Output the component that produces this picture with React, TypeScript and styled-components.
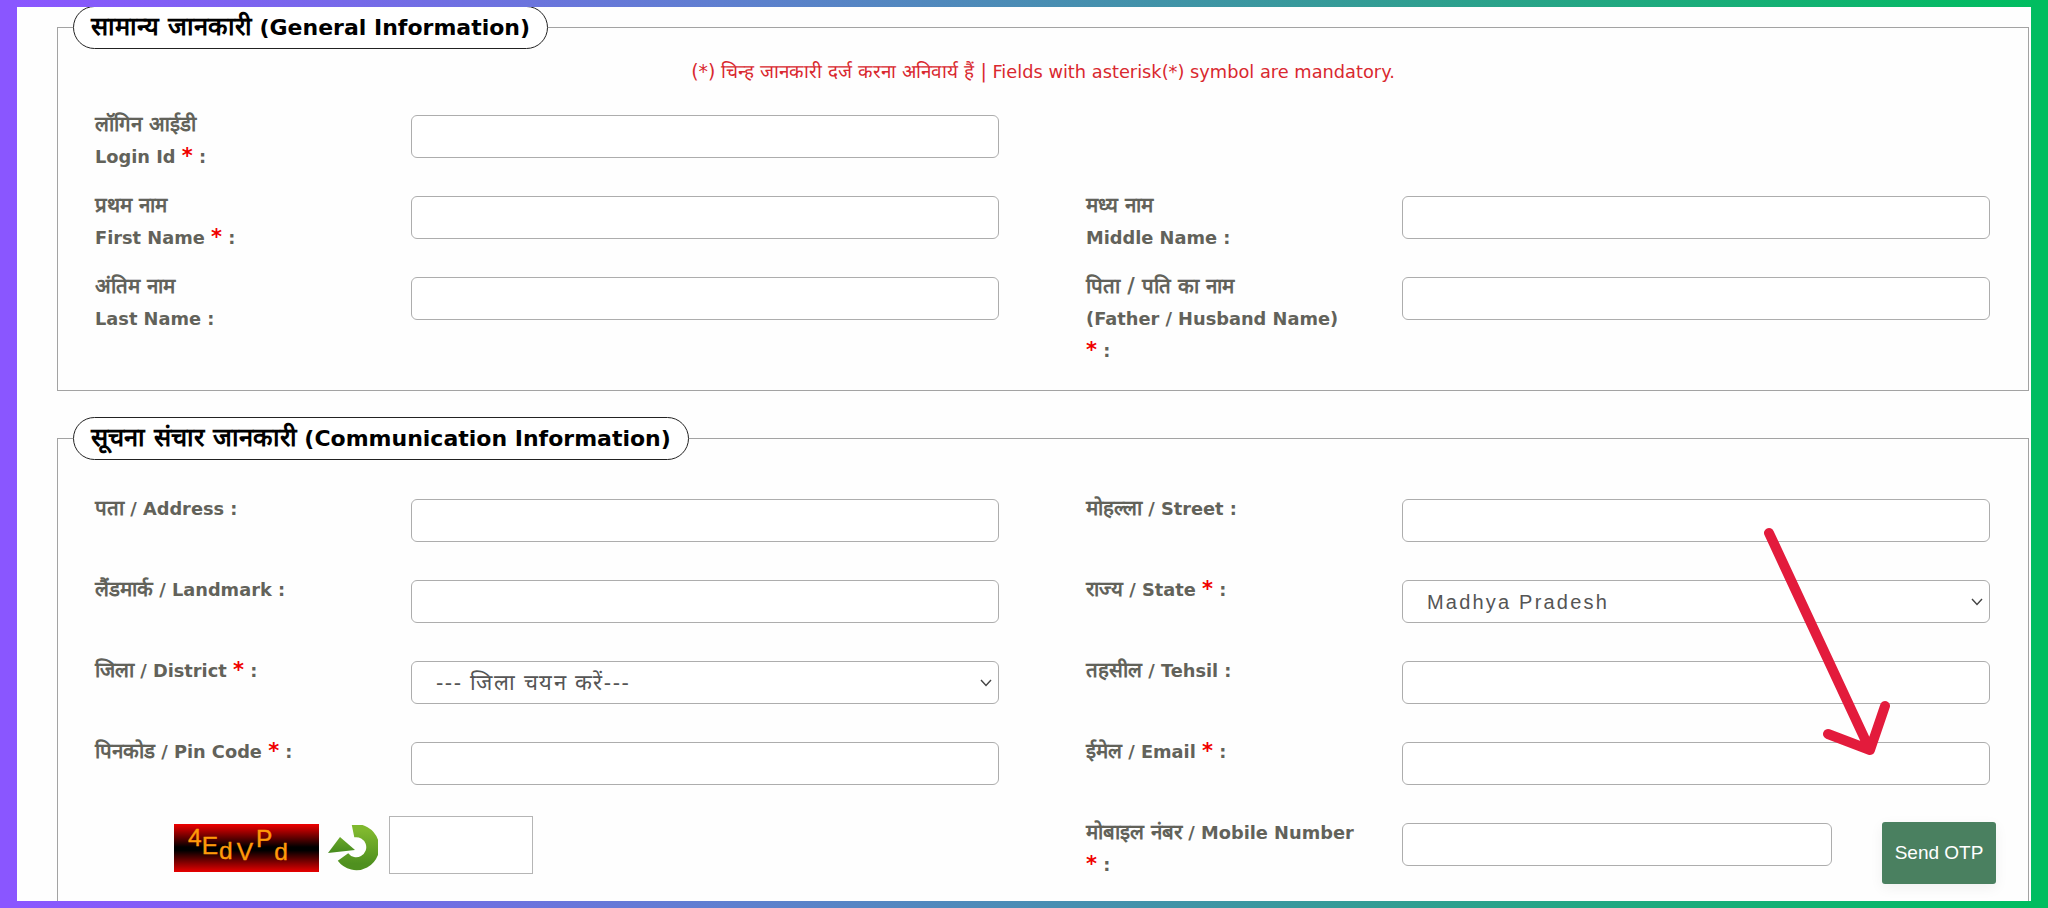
import React from 'react'
import styled, { createGlobalStyle } from 'styled-components'

const GlobalStyle = createGlobalStyle`
  html, body {
    margin: 0;
    padding: 0;
    background: #fff;
  }
`

const chevron =
  "data:image/svg+xml,%3Csvg xmlns='http://www.w3.org/2000/svg' width='12' height='8' viewBox='0 0 12 8'%3E%3Cpath d='M1 1l5 5.5L11 1' fill='none' stroke='%23444' stroke-width='1.4'/%3E%3C/svg%3E"

const Frame = styled.div`
  position: relative;
  box-sizing: border-box;
  width: 2048px;
  height: 908px;
  overflow: hidden;
  padding: 0 19px 0 57px;
  background: #fefefe;
  font-family: 'DejaVu Sans', Verdana, sans-serif;
`

const GradientEdge = styled.div`
  position: absolute;
  inset: 0;
  border-style: solid;
  border-width: 7px 17px;
  border-image: linear-gradient(90deg, #8a56ff 0%, #5f7fd0 35%, #2f9f90 70%, #00bd60 100%) 1;
  pointer-events: none;
  z-index: 5;
`

const Section = styled.fieldset<{ $gap: number; $pad: number }>`
  box-sizing: border-box;
  margin: ${({ $gap }) => $gap}px 0 0;
  padding: 0 0 ${({ $pad }) => $pad}px;
  border: 1.5px solid #a3a3a3;
  min-width: 0;
`

const Title = styled.legend`
  box-sizing: border-box;
  height: 43px;
  margin-left: 15px;
  padding: 3px 17px 0;
  border: 1.5px solid #222;
  border-radius: 22px;
  background: #fff;
  color: #000;
  font-size: 22px;
  font-weight: 700;
  line-height: 36px;
  white-space: nowrap;
`

const TitleHindi = styled.span`
  font-size: 25.4px;
  line-height: 1;
`

const Note = styled.div`
  margin-top: 6px;
  height: 33px;
  color: #d9282f;
  font-size: 17.8px;
  line-height: 33px;
  text-align: center;
`

const NoteHindi = styled.span`
  font-size: 18.9px;
  line-height: 1;
`

const FormGrid = styled.div<{ $top: number }>`
  display: grid;
  grid-template-columns: 316px 588px 403px 588px;
  row-gap: 17px;
  margin: ${({ $top }) => $top}px 0 0 37px;
  align-items: start;
  grid-auto-rows: minmax(64px, auto);
`

const LabelText = styled.div<{ $right?: boolean }>`
  margin-left: ${({ $right }) => ($right ? '87px' : '0')};
  margin-bottom: -1px;
  padding-top: 1px;
  color: #62625a;
  font-size: 17.8px;
  font-weight: 700;
  line-height: 32px;
  white-space: nowrap;
`

const LabelHindi = styled.span`
  font-size: 20.5px;
  line-height: 1;
`

const Star = styled.span`
  color: #f00000;
  font-size: 21px;
  line-height: 1;
`

const TextBox = styled.input<{ $width?: number }>`
  display: block;
  box-sizing: border-box;
  width: ${({ $width }) => $width ?? 588}px;
  height: 43px;
  margin: 7px 0 0;
  padding: 0 16px;
  border: 1.5px solid #adadad;
  border-radius: 6px;
  background: #fff;
  outline: none;
`

const Dropdown = styled.select<{ $hindi?: boolean }>`
  display: block;
  box-sizing: border-box;
  width: 588px;
  height: 43px;
  margin: 7px 0 0;
  padding: 0 24px;
  appearance: none;
  border: 1.5px solid #adadad;
  border-radius: 6px;
  background: #fff url("${chevron}") no-repeat right 6px center;
  color: #555;
  font-family: 'Liberation Sans', Arial, sans-serif;
  font-size: ${({ $hindi }) => ($hindi ? '22px' : '20px')};
  letter-spacing: ${({ $hindi }) => ($hindi ? '1.5px' : '2.2px')};
  outline: none;
`

const CaptchaCell = styled.div`
  grid-column: 1 / span 2;
  display: flex;
  align-items: flex-start;
  height: 64px;
  padding-left: 79px;
`

const CaptchaImage = styled.div`
  display: flex;
  align-items: flex-start;
  box-sizing: border-box;
  width: 145px;
  height: 48px;
  margin-top: 8px;
  padding-left: 14px;
  background: linear-gradient(180deg, #f00000 0%, #000 48%, #000 55%, #e80000 100%);
`

const CaptchaChar = styled.span<{ $top: number; $gap: number }>`
  margin-top: ${({ $top }) => $top}px;
  margin-left: ${({ $gap }) => $gap}px;
  color: #ff9a0a;
  font-family: 'Liberation Sans', Arial, sans-serif;
  font-size: 24.5px;
  line-height: 24px;
  -webkit-text-stroke: 0.4px #ff9a0a;
`

const RefreshIcon = styled.svg`
  flex: none;
  width: 52px;
  height: 46px;
  margin: 9px 0 0 7px;
`

const CaptchaInput = styled.input`
  box-sizing: border-box;
  width: 144px;
  height: 58px;
  margin-left: 11px;
  border: 1.5px solid #b5b5b5;
  background: #fff;
  outline: none;
`

const OtpCell = styled.div`
  display: flex;
  align-items: flex-start;
  width: 594px;
`

const SendOtpButton = styled.button`
  box-sizing: border-box;
  flex: none;
  width: 114px;
  height: 62px;
  margin: 6px 0 0 50px;
  padding: 0;
  border: none;
  border-radius: 3px;
  background: #4a8060;
  box-shadow: 0 4px 14px rgba(0, 0, 0, 0.06);
  color: #fff;
  font-family: 'Liberation Sans', Arial, sans-serif;
  font-size: 19px;
`

const ArrowOverlay = styled.svg`
  position: absolute;
  top: 0;
  left: 0;
  width: 2048px;
  height: 908px;
  pointer-events: none;
  z-index: 4;
`

type LabelProps = {
  hindi?: string
  text: string
  required?: boolean
  right?: boolean
  stacked?: boolean
  starBreak?: boolean
}

const Label: React.FC<LabelProps> = ({ hindi, text, required, right, stacked, starBreak }) => (
  <LabelText $right={right}>
    {hindi && <LabelHindi>{hindi}</LabelHindi>}
    {stacked ? <br /> : hindi && ' / '}
    {text}
    {starBreak ? <br /> : ' '}
    {required && (
      <>
        <Star>*</Star>{' '}
      </>
    )}
    :
  </LabelText>
)

const captchaChars = [
  { c: '4', top: 2, gap: 0 },
  { c: 'E', top: 10, gap: 0 },
  { c: 'd', top: 15, gap: 1 },
  { c: 'V', top: 16, gap: 4 },
  { c: 'P', top: 3, gap: 3 },
  { c: 'd', top: 16, gap: 2 },
]

const App: React.FC = () => {
  return (
    <Frame>
      <GlobalStyle />
      <Section $gap={6} $pad={24}>
        <Title>
          <TitleHindi>सामान्य जानकारी</TitleHindi> (General Information)
        </Title>
        <Note>
          <NoteHindi>(*) चिन्ह जानकारी दर्ज करना अनिवार्य हैं |</NoteHindi> Fields with asterisk(*) symbol are mandatory.
        </Note>
        <FormGrid $top={20}>
          <Label stacked hindi="लॉगिन आईडी" text="Login Id" required />
          <TextBox />
          <span />
          <span />
          <Label stacked hindi="प्रथम नाम" text="First Name" required />
          <TextBox />
          <Label stacked right hindi="मध्य नाम" text="Middle Name" />
          <TextBox />
          <Label stacked hindi="अंतिम नाम" text="Last Name" />
          <TextBox />
          <Label stacked right hindi="पिता / पति का नाम" text="(Father / Husband Name)" required starBreak />
          <TextBox />
        </FormGrid>
      </Section>
      <Section $gap={26} $pad={40}>
        <Title>
          <TitleHindi>सूचना संचार जानकारी</TitleHindi> (Communication Information)
        </Title>
        <FormGrid $top={32}>
          <Label hindi="पता" text="Address" />
          <TextBox />
          <Label right hindi="मोहल्ला" text="Street" />
          <TextBox />
          <Label hindi="लैंडमार्क" text="Landmark" />
          <TextBox />
          <Label right hindi="राज्य" text="State" required />
          <Dropdown defaultValue="mp">
            <option value="mp">Madhya Pradesh</option>
          </Dropdown>
          <Label hindi="जिला" text="District" required />
          <Dropdown $hindi defaultValue="">
            <option value="">--- जिला चयन करें---</option>
          </Dropdown>
          <Label right hindi="तहसील" text="Tehsil" />
          <TextBox />
          <Label hindi="पिनकोड" text="Pin Code" required />
          <TextBox />
          <Label right hindi="ईमेल" text="Email" required />
          <TextBox />
          <CaptchaCell>
            <CaptchaImage>
              {captchaChars.map((item, index) => (
                <CaptchaChar key={index} $top={item.top} $gap={item.gap}>
                  {item.c}
                </CaptchaChar>
              ))}
            </CaptchaImage>
            <RefreshIcon viewBox="0 0 52 46">
              <defs>
                <linearGradient id="refreshGreen" x1="0" y1="0" x2="0" y2="1">
                  <stop offset="0" stopColor="#7fb82e" />
                  <stop offset="1" stopColor="#4f901f" />
                </linearGradient>
                <linearGradient id="refreshHead" x1="0" y1="0" x2="0" y2="1">
                  <stop offset="0" stopColor="#6aa828" />
                  <stop offset="1" stopColor="#468a1e" />
                </linearGradient>
              </defs>
              <path d="M27 6 A 16.5 16.5 0 1 1 17 32" fill="none" stroke="url(#refreshGreen)" strokeWidth="13" />
              <path d="M14 12 L2 28 L29 25 Z" fill="url(#refreshHead)" />
            </RefreshIcon>
            <CaptchaInput />
          </CaptchaCell>
          <Label right hindi="मोबाइल नंबर" text="Mobile Number" required starBreak />
          <OtpCell>
            <TextBox $width={430} />
            <SendOtpButton>Send OTP</SendOtpButton>
          </OtpCell>
        </FormGrid>
      </Section>
      <ArrowOverlay viewBox="0 0 2048 908">
        <path
          d="M1769 533 L1870 750 M1828 734 L1870 750 L1885 706"
          fill="none"
          stroke="#e31b3c"
          strokeWidth="10"
          strokeLinecap="round"
          strokeLinejoin="round"
        />
      </ArrowOverlay>
      <GradientEdge />
    </Frame>
  )
}

export default App
